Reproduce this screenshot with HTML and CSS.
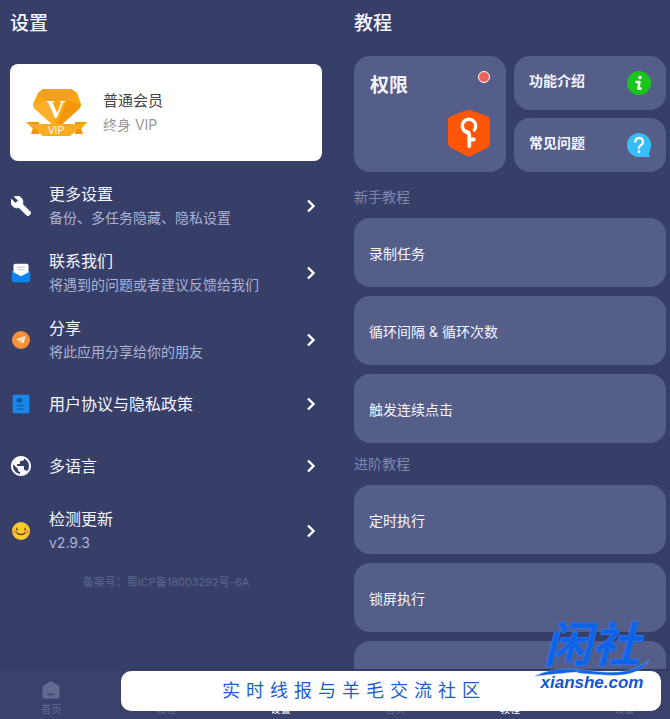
FILE: index.html
```html
<!DOCTYPE html>
<html lang="zh-CN">
  <head>
    <meta charset="UTF-8" />
    <meta name="viewport" content="width=device-width, initial-scale=1.0" />
    <title>设置 / 教程</title>
    <link rel="stylesheet" href="styles.css" />
  </head>
  <body>
    <svg class="defs" aria-hidden="true">
      <symbol id="chevron" viewBox="0 0 12 16">
        <path d="M3 2.500L8.500 8 3 13.500" fill="none" stroke="#fff" stroke-width="2.400" />
      </symbol>
      <symbol id="home" viewBox="0 0 20 20">
        <path d="M9 1.400a2 2 0 0 1 2 0l6.500 4A2 2 0 0 1 18.500 7v9.500a2 2 0 0 1-2 2h-13a2 2 0 0 1-2-2V7a2 2 0 0 1 1-1.600z" fill="currentColor" />
        <path d="M6.500 14.500h7" stroke="#3a426b" stroke-width="1.500" />
      </symbol>
      <symbol id="book" viewBox="0 0 20 20">
        <rect x="3" y="2" width="14" height="16" rx="2" fill="currentColor" />
      </symbol>
      <symbol id="gear" viewBox="0 0 20 20">
        <path d="M10 1l8 4.500v9L10 19l-8-4.500v-9z" fill="currentColor" />
      </symbol>
    </svg>

    <div class="screens">
      <section class="screen">
        <main class="content">
          <h1>设置</h1>
          <a class="member" href="#">
            <svg class="member-icon" viewBox="0 0 64 52">
              <path d="M1 35h13v12H6l2-6z" fill="#ee960f" />
              <path d="M62 35H50v12h8l-2-6z" fill="#ee960f" />
              <path d="M18 2h28l6 4 4 11-1 4-19 17h-8L9 21l-1-4 5-11z" fill="#fba60f" />
              <path d="M18 2h28l6 4-10 9H22L13 6z" fill="#f2a01f" />
              <path d="M8 17l14-3 10 24h-4L9 21z" fill="#fdb02a" />
              <path d="M56 17l-14-3-10 24h4l19-17z" fill="#f39609" />
              <path d="M1 35l7 2h48l6-2-6 7H8z" fill="#f7a91f" />
              <path d="M8 37h48l-6 8-5 4H18l-5-4z" fill="#f9ac22" />
              <text x="31" y="31" class="gem-letter">V</text>
              <text x="31" y="47" class="gem-label">VIP</text>
            </svg>
            <div>
              <div class="member-name">普通会员</div>
              <div class="member-desc">终身 VIP</div>
            </div>
          </a>

          <nav class="settings">
            <a class="row" href="#">
              <svg class="row-icon" viewBox="1 1 22 22">
                <path d="M22.700 19l-9.100-9.100c.9-2.300.4-5-1.500-6.900-2-2-5-2.400-7.400-1.300L9 6 6 9 1.600 4.700C.4 7.100.9 10.100 2.900 12.100c1.900 1.900 4.600 2.400 6.900 1.500l9.100 9.100c.4.4 1 .4 1.400 0l2.300-2.300c.5-.4.5-1.100.1-1.400z" fill="#fff" stroke="#fff" stroke-width="1" />
              </svg>
              <div class="row-text">
                <div class="row-title">更多设置</div>
                <div class="row-desc">备份、多任务隐藏、隐私设置</div>
              </div>
              <svg class="chevron"><use href="#chevron" /></svg>
            </a>
            <a class="row" href="#">
              <svg class="row-icon" viewBox="0 0 24 24">
                <rect x="1" y="9" width="22" height="14" rx="2.500" fill="#0c86ee" />
                <path d="M3 3a2 2 0 0 1 2-2h14a2 2 0 0 1 2 2v8l-9 5-9-5z" fill="#fff" />
                <path d="M7 5h10M8 8h8" stroke="#bcc8d4" stroke-width="1.200" />
              </svg>
              <div class="row-text">
                <div class="row-title">联系我们</div>
                <div class="row-desc">将遇到的问题或者建议反馈给我们</div>
              </div>
              <svg class="chevron"><use href="#chevron" /></svg>
            </a>
            <a class="row" href="#">
              <svg class="row-icon" viewBox="0 0 24 24">
                <circle cx="12" cy="12" r="10.800" fill="#f99035" />
                <path d="M17.500 7L6 11.500l4.300 1.800zM17.500 7l-2.300 9-4.300-2.200z" fill="#fff0e0" />
                <path d="M10.300 13.800v3l1.800-2z" fill="#ffe0c2" />
              </svg>
              <div class="row-text">
                <div class="row-title">分享</div>
                <div class="row-desc">将此应用分享给你的朋友</div>
              </div>
              <svg class="chevron"><use href="#chevron" /></svg>
            </a>
            <a class="row single" href="#">
              <svg class="row-icon" viewBox="0 0 24 24">
                <rect x="2" y="1" width="20" height="22" rx="2" fill="#1588ea" />
                <rect x="7" y="5" width="6" height="5" rx="1" fill="#1c4f91" />
                <path d="M7 14h9M7 18h9" stroke="#1c5ea8" stroke-width="1.500" />
              </svg>
              <div class="row-text">
                <div class="row-title">用户协议与隐私政策</div>
              </div>
              <svg class="chevron"><use href="#chevron" /></svg>
            </a>
            <a class="row single" href="#">
              <svg class="row-icon" viewBox="2 2 20 20">
                <path d="M12 2C6.480 2 2 6.480 2 12s4.480 10 10 10 10-4.480 10-10S17.520 2 12 2zm-1 17.930c-3.950-.49-7-3.850-7-7.930 0-.62.080-1.210.21-1.790L9 15v1c0 1.100.9 2 2 2v1.930zm6.900-2.540c-.26-.81-1-1.390-1.900-1.390h-1v-3c0-.55-.45-1-1-1H8v-2h2c.55 0 1-.45 1-1V7h2c1.100 0 2-.9 2-2v-.41c2.930 1.190 5 4.060 5 7.410 0 2.080-.8 3.970-2.100 5.390z" fill="#fff" />
              </svg>
              <div class="row-text">
                <div class="row-title">多语言</div>
              </div>
              <svg class="chevron"><use href="#chevron" /></svg>
            </a>
            <a class="row" href="#">
              <svg class="row-icon" viewBox="0 0 24 24">
                <circle cx="12" cy="12" r="10.800" fill="#fcc82e" />
                <circle cx="4.500" cy="13" r="2" fill="#f58a4c" />
                <circle cx="19.500" cy="13" r="2" fill="#f58a4c" />
                <path d="M7 8.500v2.500M17 8.500v2.500M7 14c2 3.300 8 3.300 10 0" fill="none" stroke="#54401c" stroke-width="1.500" stroke-linecap="round" />
              </svg>
              <div class="row-text">
                <div class="row-title">检测更新</div>
                <div class="row-desc">v2.9.3</div>
              </div>
              <svg class="chevron"><use href="#chevron" /></svg>
            </a>
          </nav>
          <p class="record">备案号：蜀ICP备18003292号-6A</p>
        </main>
        <nav class="tabs">
          <a class="tab" href="#"><svg><use href="#home" /></svg>首页</a>
          <a class="tab" href="#"><svg><use href="#book" /></svg>教程</a>
          <a class="tab active" href="#"><svg><use href="#gear" /></svg>设置</a>
        </nav>
      </section>

      <section class="screen">
        <main class="content">
          <h1>教程</h1>
          <div class="shortcuts">
            <a class="card permission" href="#">
              <span class="permission-title">权限</span>
              <span class="dot"></span>
              <svg class="key-icon" viewBox="0 0 42 48">
                <path d="M17 2q4-2 8 0l14 5q3 1 3 4v23q0 3-3 5L25 46q-4 3-8 0L3 39q-3-2-3-5V11q0-3 3-4z" fill="#fd5606" />
                <path d="M17.300 22.500a6.700 6.700 0 1 1 9-1.500" fill="none" stroke="#fff" stroke-width="3.400" stroke-linecap="round" />
                <path d="M17.300 22.500q4 .5 4 4V37M21.300 30.500h4.500" fill="none" stroke="#fff" stroke-width="3.800" stroke-linejoin="round" stroke-linecap="round" />
              </svg>
            </a>
            <a class="card shortcut" href="#">
              <span class="shortcut-title">功能介绍</span>
              <svg class="shortcut-icon" viewBox="0 0 24 24">
                <circle cx="12" cy="12" r="12" fill="#19c51d" />
                <circle cx="13" cy="6.500" r="1.800" fill="#fff" />
                <path d="M9.500 11h3l-1.200 6.500h2.400" fill="none" stroke="#fff" stroke-width="2.400" stroke-linecap="round" stroke-linejoin="round" />
              </svg>
            </a>
            <a class="card shortcut" href="#">
              <span class="shortcut-title">常见问题</span>
              <svg class="shortcut-icon" viewBox="0 0 24 24">
                <path d="M12 0a12 12 0 0 1 12 12v2q-1 4-2 6l1 4H12a12 12 0 0 1 0-24z" fill="#38bdf8" />
                <path d="M8.300 8.800a3.800 3.800 0 1 1 5.500 3.400q-1.800 1-1.800 3" fill="none" stroke="#fff" stroke-width="2.200" stroke-linecap="round" />
                <circle cx="12" cy="18.700" r="1.400" fill="#fff" />
              </svg>
            </a>
          </div>

          <h2>新手教程</h2>
          <div class="lessons">
            <a class="card lesson" href="#">录制任务</a>
            <a class="card lesson" href="#">循环间隔 &amp; 循环次数</a>
            <a class="card lesson" href="#">触发连续点击</a>
          </div>
          <h2>进阶教程</h2>
          <div class="lessons">
            <a class="card lesson" href="#">定时执行</a>
            <a class="card lesson" href="#">锁屏执行</a>
            <a class="card lesson" href="#">自动打开应用执行</a>
          </div>
        </main>
        <nav class="tabs">
          <a class="tab" href="#"><svg><use href="#home" /></svg>首页</a>
          <a class="tab active" href="#"><svg><use href="#book" /></svg>教程</a>
          <a class="tab" href="#"><svg><use href="#gear" /></svg>设置</a>
        </nav>
      </section>
    </div>

    <div class="banner">
      <span class="slogan">实时线报与羊毛交流社区</span>
      <div class="brand">
        <div class="brand-name">闲社</div>
        <svg class="swoosh" viewBox="0 0 116 18">
          <path d="M1 17Q22 7 50 11T92 12 115 1Q106 18 72 16T44 13 1 17z" fill="#0d62e6" stroke="#7fa9f0" stroke-width=".5" />
        </svg>
        <div class="brand-url">xianshe.com</div>
      </div>
    </div>
  </body>
</html>
```

FILE: styles.css
```css
* {
  box-sizing: border-box;
}
body {
  margin: 0;
  height: 100vh;
  position: relative;
  overflow: hidden;
  background-color: #373f69;
  color: #f4f6ff;
  font-family: Inter, "Noto Sans CJK SC", sans-serif;
  font-size: 14px;
}
a {
  color: inherit;
  text-decoration: none;
}
.defs {
  display: none;
}

/* the two screens bleed a little past both window edges */
.screens {
  display: flex;
  height: 100%;
  margin: 0 -12px 0 -6px;
}
.screen {
  flex: 1;
  min-width: 0;
  display: flex;
  flex-direction: column;
}
.content {
  flex: 1;
  min-height: 0;
  padding: 10px 16px 0;
  overflow-y: auto;
  scrollbar-width: none;
}
h1 {
  margin: 0;
  font-size: 19px;
  font-weight: 500;
  line-height: 28px;
}
h2 {
  margin: 0;
  padding: 11px 0;
  color: #7e86ac;
  font-size: 14px;
  font-weight: 400;
  line-height: 20px;
}

/* settings */
.member {
  display: flex;
  align-items: center;
  gap: 14px;
  margin-top: 26px;
  padding: 23px 15px 22px;
  border-radius: 8px;
  background-color: #fff;
}
.member-icon {
  width: 64px;
  height: 52px;
}
.gem-letter {
  fill: #fff;
  font: bold 26px "Liberation Serif", serif;
  text-anchor: middle;
}
.gem-label {
  fill: #fff;
  font: 10px "Liberation Sans", sans-serif;
  text-anchor: middle;
}
.member-name {
  color: #444;
  font-size: 15px;
  line-height: 24px;
}
.member-desc {
  color: #999;
  line-height: 24px;
}
.settings {
  margin-top: 11px;
}
.row {
  display: flex;
  align-items: center;
  height: 67px;
  padding: 0 5px 0 1px;
}
.row.single {
  height: 62px;
}
.row-icon {
  width: 20px;
  height: 20px;
}
.row-text {
  flex: 1;
  margin-left: 18px;
}
.row-title {
  font-size: 16px;
  line-height: 24px;
}
.row-desc {
  color: #a9b1d6;
  line-height: 23px;
}
.chevron {
  width: 12px;
  height: 16px;
}
.record {
  margin: 8px 0 0;
  color: #5c648e;
  font-size: 11px;
  line-height: 20px;
  text-align: center;
}

/* tutorials */
.card {
  border-radius: 16px;
  background-color: #555d89;
}
.shortcuts {
  display: grid;
  grid-template-columns: 1fr 1fr;
  grid-auto-rows: 54px;
  gap: 8px;
  margin: 18px 0 4px;
}
.permission {
  grid-row: span 2;
  display: grid;
  grid-template-columns: 1fr auto;
  align-content: space-between;
  padding: 15px 16px;
}
.permission-title {
  font-size: 19px;
  font-weight: 700;
  line-height: 30px;
}
.dot {
  width: 12px;
  height: 12px;
  border: 1px solid #fff;
  border-radius: 50%;
  background-color: #f0605f;
}
.key-icon {
  grid-column: 1 / 3;
  justify-self: end;
  width: 42px;
  height: 48px;
}
.shortcut {
  display: flex;
  align-items: flex-start;
  justify-content: space-between;
  padding: 15px;
}
.shortcut-title {
  font-weight: 700;
  line-height: 20px;
}
.shortcut-icon {
  width: 24px;
  height: 24px;
}
.lessons {
  display: grid;
  gap: 9px;
}
.lesson {
  display: flex;
  align-items: center;
  height: 69px;
  padding: 0 15px;
}

/* bottom tabs */
.tabs {
  display: flex;
  height: 50px;
  padding-top: 10px;
  border-top: 1px solid #323a60;
  background-color: #3a426b;
}
.tab {
  flex: 1;
  display: flex;
  flex-direction: column;
  align-items: center;
  gap: 1px;
  color: #626a91;
  font-size: 10px;
  line-height: 16px;
}
.tab svg {
  width: 20px;
  height: 20px;
}
.tab.active {
  color: #fff;
}

/* promo banner over the tabs */
.banner {
  position: absolute;
  right: 9px;
  bottom: 8px;
  left: 121px;
  height: 40px;
  padding-right: 74px;
  border-radius: 10px;
  background-color: #fff;
  color: #1d5bd0;
  text-align: center;
}
.slogan {
  font-size: 18px;
  letter-spacing: 6px;
  line-height: 40px;
}
.brand {
  position: absolute;
  right: 11px;
  bottom: 20px;
  width: 116px;
  color: #0d62e6;
}
.brand-name {
  font-size: 48px;
  font-style: italic;
  font-weight: 700;
  line-height: 48px;
  -webkit-text-stroke: 1px #2a72ea;
}
.swoosh {
  display: block;
  width: 116px;
  height: 18px;
  margin-top: -10px;
}
.brand-url {
  margin-top: -2px;
  color: #1357cf;
  font-family: "Liberation Sans", sans-serif;
  font-size: 17px;
  font-style: italic;
  font-weight: 700;
  line-height: 16px;
}
```
